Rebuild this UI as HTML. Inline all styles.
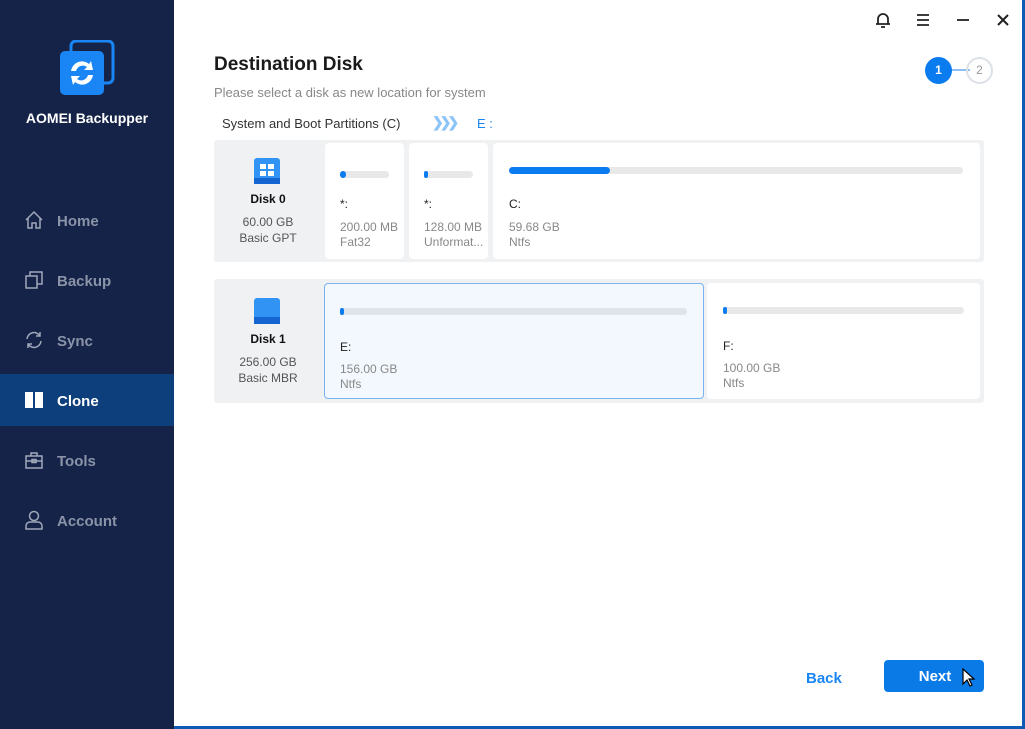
<!DOCTYPE html>
<html><head><meta charset="utf-8"><style>
*{margin:0;padding:0;box-sizing:border-box}
body{width:1025px;height:729px;position:relative;overflow:hidden;background:#fff;font-family:"Liberation Sans",sans-serif;}
.side{position:absolute;left:0;top:0;width:174px;height:729px;background:#142347;}
.logo{position:absolute;left:58px;top:40px;width:58px;height:56px}
.brand{position:absolute;left:0;width:174px;top:110px;text-align:center;color:#fff;font-weight:bold;font-size:14px}
.nav{position:absolute;left:0;width:174px;height:52px;color:#8a93a8;font-size:15px;font-weight:bold;}
.nav span{position:absolute;left:57px;top:19px}
.nav svg{position:absolute;left:24px;top:16px}
.nav.act{background:#0c3f7c;color:#fff}
.abs{position:absolute}
.t{position:absolute;font-size:12px;color:#888;line-height:15px}
.row{position:absolute;left:214px;width:770px;background:#f0f1f3;border-radius:3px}
.card{position:absolute;background:#fff;border-radius:4px}
.bar{position:absolute;height:7px;background:#e8e8e8;border-radius:4px}
.fill{position:absolute;left:0;top:0;height:7px;background:#0a7cf0;border-radius:4px}
.lbl{position:absolute;font-size:12px;color:#222}
.dn{position:absolute;width:108px;text-align:center;font-size:12px;color:#555;line-height:16px}
</style></head><body>
<div class="side">
<svg class="logo" viewBox="0 0 58 56"><rect x="13" y="1" width="42" height="42" rx="5" fill="none" stroke="#1a86f5" stroke-width="3"/><rect x="2" y="11" width="44" height="44" rx="5" fill="#1a86f5"/><path d="M13 31a11 11 0 0 1 18-7l2-3 2 9-9 0 3-3a7 7 0 0 0-11 4z" fill="#fff"/><path d="M35 35a11 11 0 0 1-18 7l-2 3-2-9 9 0-3 3a7 7 0 0 0 11-4z" fill="#fff"/></svg>
<div class="brand">AOMEI Backupper</div>
<div class="nav" style="top:194px"><svg width="20" height="20" viewBox="0 0 20 20" fill="none" stroke="#a0a8ba" stroke-width="1.5"><path d="M2 10L10 2l8 8M4 8v10h4v-5h4v5h4V8"/></svg><span>Home</span></div>
<div class="nav" style="top:254px"><svg width="20" height="20" viewBox="0 0 20 20" fill="none" stroke="#a0a8ba" stroke-width="1.5"><rect x="2" y="6" width="11" height="12"/><path d="M6 6V2h12v12h-5"/></svg><span>Backup</span></div>
<div class="nav" style="top:314px"><svg width="20" height="20" viewBox="0 0 20 20" fill="none" stroke="#a0a8ba" stroke-width="1.5"><path d="M3 9a7 7 0 0 1 13-3M17 11a7 7 0 0 1-13 3M16 2v4h-4M4 18v-4h4"/></svg><span>Sync</span></div>
<div class="nav act" style="top:374px"><svg width="20" height="20" viewBox="0 0 20 20"><rect x="1" y="2" width="8" height="16" fill="#fff"/><rect x="11" y="2" width="8" height="16" fill="#fff"/></svg><span>Clone</span></div>
<div class="nav" style="top:434px"><svg width="20" height="20" viewBox="0 0 20 20" fill="none" stroke="#a0a8ba" stroke-width="1.5"><rect x="2" y="6" width="16" height="12"/><path d="M7 6V3h6v3M2 11h16"/><rect x="8" y="9.5" width="4" height="3"/></svg><span>Tools</span></div>
<div class="nav" style="top:494px"><svg width="20" height="20" viewBox="0 0 20 20" fill="none" stroke="#a0a8ba" stroke-width="1.5"><circle cx="10" cy="6" r="4.5"/><path d="M2 19v-3a4 4 0 0 1 4-4h8a4 4 0 0 1 4 4v3z"/></svg><span>Account</span></div>
</div>
<div class="abs" style="left:1022px;top:0;width:3px;height:729px;background:#0d5bb5"></div>
<div class="abs" style="left:174px;top:726px;width:851px;height:3px;background:#0d5bb5"></div>
<svg class="abs" style="left:874px;top:11px" width="18" height="18" viewBox="0 0 18 18" fill="none" stroke="#222" stroke-width="1.8"><path d="M4 13V8a5 5 0 0 1 10 0v5zM2 13h14M7 16h4"/></svg>
<svg class="abs" style="left:915px;top:12px" width="16" height="16" viewBox="0 0 16 16" stroke="#222" stroke-width="1.8"><path d="M2 3h12M2 8h12M2 13h12"/></svg>
<svg class="abs" style="left:955px;top:12px" width="16" height="16" viewBox="0 0 16 16" stroke="#222" stroke-width="1.8"><path d="M2 8h12"/></svg>
<svg class="abs" style="left:995px;top:12px" width="16" height="16" viewBox="0 0 16 16" stroke="#222" stroke-width="2"><path d="M3 3l10 10M13 3L3 13"/></svg>
<div class="abs" style="left:950px;top:69px;width:20px;height:2px;background:#8dbff5"></div>
<div class="abs" style="left:925px;top:57px;width:27px;height:27px;border-radius:50%;background:#0a7cf0;color:#fff;font-size:12px;font-weight:bold;text-align:center;line-height:27px">1</div>
<div class="abs" style="left:966px;top:57px;width:27px;height:27px;border-radius:50%;border:2px solid #dde1e8;color:#999;font-size:12px;text-align:center;line-height:23px">2</div>
<div class="abs" style="left:214px;top:54px;font-size:19px;font-weight:bold;color:#1a1a1a">Destination Disk</div>
<div class="abs" style="left:214px;top:85px;font-size:13px;color:#888">Please select a disk as new location for system</div>
<div class="abs" style="left:222px;top:116px;font-size:13px;color:#333">System and Boot Partitions (C)</div>
<div class="abs" style="left:432px;top:114px;font-size:14px;color:#8cc4f7;font-weight:bold;letter-spacing:-4px">❯❯❯</div>
<div class="abs" style="left:477px;top:116px;font-size:13px;color:#1a86f5">E :</div>
<div class="row" style="top:140px;height:122px">
<svg class="abs" style="left:38px;top:16px" width="30" height="30" viewBox="0 0 30 30"><rect x="2" y="2" width="26" height="26" rx="3" fill="#3194f5"/><rect x="2" y="22" width="26" height="6" fill="#1565d0"/><path d="M8 8h6v5H8zM16 8h6v5h-6zM8 15h6v5H8zM16 15h6v5h-6z" fill="#fff"/></svg>
<div class="dn" style="left:0;top:51px;color:#111;font-weight:bold">Disk 0</div>
<div class="dn" style="left:0;top:74px">60.00 GB<br>Basic GPT</div>
<div class="card" style="left:111px;top:3px;width:79px;height:116px"><div class="bar" style="left:15px;top:28px;width:49px"><div class="fill" style="width:6px"></div></div><div class="lbl" style="left:15px;top:54px">*:</div><div class="t" style="left:15px;top:77px">200.00 MB<br>Fat32</div></div>
<div class="card" style="left:195px;top:3px;width:79px;height:116px"><div class="bar" style="left:15px;top:28px;width:49px"><div class="fill" style="width:4px"></div></div><div class="lbl" style="left:15px;top:54px">*:</div><div class="t" style="left:15px;top:77px">128.00 MB<br>Unformat...</div></div>
<div class="card" style="left:279px;top:3px;width:487px;height:116px"><div class="bar" style="left:16px;top:24px;width:454px"><div class="fill" style="width:101px"></div></div><div class="lbl" style="left:16px;top:54px">C:</div><div class="t" style="left:16px;top:77px">59.68 GB<br>Ntfs</div></div>
</div>
<div class="row" style="top:279px;height:124px">
<svg class="abs" style="left:38px;top:17px" width="30" height="30" viewBox="0 0 30 30"><rect x="2" y="2" width="26" height="26" rx="3" fill="#3194f5"/><rect x="2" y="21" width="26" height="7" fill="#1565d0"/></svg>
<div class="dn" style="left:0;top:52px;color:#111;font-weight:bold">Disk 1</div>
<div class="dn" style="left:0;top:75px">256.00 GB<br>Basic MBR</div>
<div class="card" style="left:110px;top:4px;width:380px;height:116px;background:#f3f8fe;border:1.5px solid #7ab3f0"><div class="bar" style="left:15px;top:24px;width:347px;background:#dfe3ea"><div class="fill" style="width:4px"></div></div><div class="lbl" style="left:15px;top:56px">E:</div><div class="t" style="left:15px;top:78px">156.00 GB<br>Ntfs</div></div>
<div class="card" style="left:493px;top:4px;width:273px;height:116px"><div class="bar" style="left:16px;top:24px;width:241px"><div class="fill" style="width:4px"></div></div><div class="lbl" style="left:16px;top:56px">F:</div><div class="t" style="left:16px;top:78px">100.00 GB<br>Ntfs</div></div>
</div>
<div class="abs" style="left:806px;top:670px;font-size:15px;font-weight:bold;color:#1a86f5">Back</div>
<div class="abs" style="left:884px;top:660px;width:100px;height:32px;background:#0a7ae6;border-radius:4px;color:#fff;font-size:15px;font-weight:bold;text-align:center;line-height:34px;padding-left:2px">Next</div>
<svg class="abs" style="left:962px;top:668px" width="14" height="20" viewBox="0 0 14 20"><path d="M1 1v15l4-4 3 6 2-1-3-6h5z" fill="#fff" stroke="#000" stroke-width="1.2"/></svg>
</body></html>
